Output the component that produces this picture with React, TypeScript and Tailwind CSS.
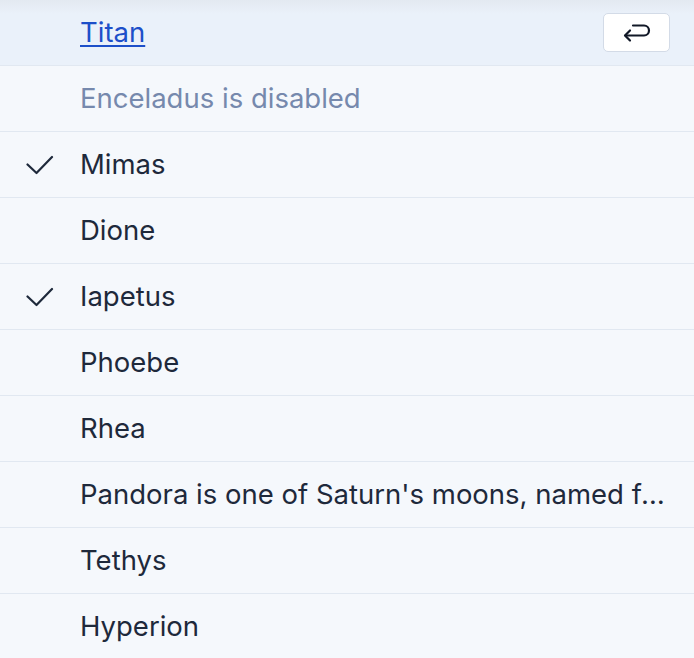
import React from "react";

const items: { label: string; checked?: boolean }[] = [
  { label: "Mimas", checked: true },
  { label: "Dione" },
  { label: "Iapetus", checked: true },
  { label: "Phoebe" },
  { label: "Rhea" },
  { label: "Pandora is one of Saturn's moons, named for a Titaness of Greek mythology" },
  { label: "Tethys" },
  { label: "Hyperion" },
];

function Check() {
  return (
    <svg width="28" height="20" viewBox="0 0 28 20" fill="none">
      <path d="M1.5 9.5 L10.5 18 L26 2" stroke="#1e293b" strokeWidth="2.2" strokeLinecap="round" strokeLinejoin="round" />
    </svg>
  );
}

function EnterIcon() {
  return (
    <svg width="28" height="20" viewBox="0 0 28 20" fill="none">
      <path d="M10 2.5 H21 a5 5 0 0 1 0 10 H2.5" stroke="#111827" strokeWidth="2.2" strokeLinecap="round" strokeLinejoin="round" />
      <path d="M7 7.5 L2 12.5 L7 17.5" stroke="#111827" strokeWidth="2.2" strokeLinecap="round" strokeLinejoin="round" />
    </svg>
  );
}

export default function App() {
  return (
    <div
      className="w-[694px] h-[658px] overflow-hidden bg-[#f5f8fc] text-[#1e293b] text-[27.5px]"
      style={{ fontFamily: "Inter, 'Noto Sans', sans-serif" }}
    >
      <div className="relative h-[66px] bg-[#eaf1fa] border-b border-[#e1e8f1] flex items-center pl-[80px] pr-[24px]">
        <div className="absolute inset-x-0 top-0 h-[14px] bg-gradient-to-b from-[#e3e9f1] to-transparent pointer-events-none" />
        <a href="#" className="relative flex-1 text-[#1d4fc9] underline underline-offset-[3px] decoration-[2px]">
          Titan
        </a>
        <div className="relative w-[67px] h-[39px] rounded-[5px] border border-[#d3dbe7] bg-white flex items-center justify-center">
          <EnterIcon />
        </div>
      </div>
      <div className="h-[66px] border-b border-[#e1e8f1] flex items-center pl-[80px] text-[#7689ad]">
        Enceladus is disabled
      </div>
      {items.map((it) => (
        <div key={it.label} className="h-[66px] border-b border-[#e1e8f1] flex items-center">
          <div className="w-[80px] pl-[26px] flex items-center">{it.checked ? <Check /> : null}</div>
          <div className="flex-1 min-w-0 pr-[26px] truncate">{it.label}</div>
        </div>
      ))}
    </div>
  );
}
